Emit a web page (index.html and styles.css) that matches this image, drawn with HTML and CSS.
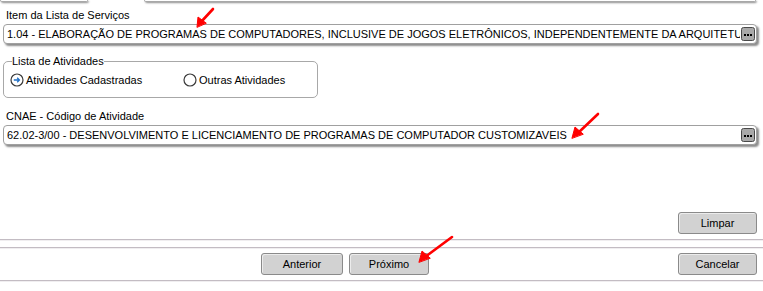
FILE: index.html
```html
<!DOCTYPE html>
<html lang="pt-BR">
<head>
  <meta charset="UTF-8">
  <title>Atividade</title>
<link rel="stylesheet" href="styles.css">
</head>
<body>

<div class="page">

  <!-- bottom of the fields above (cut off) -->
  <div class="stubs">
    <div class="stub stub-a"></div>
    <div class="stub stub-b"></div>
  </div>

  <div class="campo">
    <label class="rotulo">Item da Lista de Serviços</label>
    <div class="caixa">
      <span class="valor">1.04 - ELABORAÇÃO DE PROGRAMAS DE COMPUTADORES, INCLUSIVE DE JOGOS ELETRÔNICOS, INDEPENDENTEMENTE DA ARQUITETU</span>
      <span class="lupa">
        <svg width="14" height="14" viewBox="0 0 14 14">
          <rect x="0.5" y="0.5" width="13" height="13" rx="2" fill="#a9a9a9" stroke="#4a4a4a"/>
          <rect x="3" y="7" width="2" height="2" fill="#000"/>
          <rect x="6" y="7" width="2" height="2" fill="#000"/>
          <rect x="9" y="7" width="2" height="2" fill="#000"/>
        </svg>
      </span>
    </div>
  </div>

  <fieldset class="grupo">
    <legend>Lista de Atividades</legend>
    <div class="opcoes">
      <label class="opcao opcao-1">
        <svg width="14" height="14" viewBox="0 0 14 14">
          <circle cx="7" cy="7" r="6" fill="#fff" stroke="#3a3a3a" stroke-width="1.2"/>
          <path d="M3.8 7h5.6M7.2 4.8 9.4 7 7.2 9.2" fill="none" stroke="#1f6fc5" stroke-width="1.3"/>
        </svg>
        Atividades Cadastradas
      </label>
      <label class="opcao">
        <svg width="14" height="14" viewBox="0 0 14 14">
          <circle cx="7" cy="7" r="6" fill="#fff" stroke="#3a3a3a" stroke-width="1.2"/>
        </svg>
        Outras Atividades
      </label>
    </div>
  </fieldset>

  <div class="campo campo-cnae">
    <label class="rotulo">CNAE - Código de Atividade</label>
    <div class="caixa">
      <span class="valor">62.02-3/00 - DESENVOLVIMENTO E LICENCIAMENTO DE PROGRAMAS DE COMPUTADOR CUSTOMIZAVEIS</span>
      <span class="lupa">
        <svg width="14" height="14" viewBox="0 0 14 14">
          <rect x="0.5" y="0.5" width="13" height="13" rx="2" fill="#a9a9a9" stroke="#4a4a4a"/>
          <rect x="3" y="7" width="2" height="2" fill="#000"/>
          <rect x="6" y="7" width="2" height="2" fill="#000"/>
          <rect x="9" y="7" width="2" height="2" fill="#000"/>
        </svg>
      </span>
    </div>
  </div>

  <div class="linha-limpar">
    <button class="botao">Limpar</button>
  </div>
</div>

<hr class="traco traco-1">
<hr class="traco traco-2">

<div class="navegacao">
  <button class="botao botao-anterior">Anterior</button>
  <button class="botao botao-proximo">Próximo</button>
  <button class="botao botao-cancelar">Cancelar</button>
</div>

<hr class="traco traco-3">

<!-- red arrows drawn over the screenshot -->
<svg class="setas" width="763" height="291" viewBox="0 0 763 291">
  <g stroke="#f00" stroke-width="2.6" stroke-linecap="round" fill="#f00">
    <line x1="213" y1="9" x2="201" y2="22"/>
    <polygon points="197,27 198,17 206,23" stroke-width="1"/>
    <line x1="598" y1="114" x2="578" y2="133"/>
    <polygon points="572,138 575,127 583,134" stroke-width="1"/>
    <line x1="452" y1="237" x2="425" y2="257"/>
    <polygon points="419,262 422,251 430,258" stroke-width="1"/>
  </g>
</svg>

</body>
</html>
```

FILE: styles.css
```css
body {
    margin: 0;
    font-family: "Liberation Sans", Arial, sans-serif;
    font-size: 11px;
    color: #000;
    background: #fff;
    position: relative;
    width: 763px;
    height: 291px;
    overflow: hidden;
}

.page {
    padding: 0 6px 0 3px;
}

.stubs {
    display: flex;
    height: 3px;
}

.stub {
    height: 1px;
    border: 1px solid #a8a8a8;
    border-top: none;
    border-radius: 0 0 4px 4px;
    box-shadow: 1px 1px 2px #8a8a8a;
}

.stub-a {
    width: 86px;
    margin-left: -3px;
}

.stub-b {
    width: 610px;
    margin-left: 56px;
}

.campo {
    margin-top: 5px;
}

.rotulo {
    display: block;
    padding-left: 3px;
    line-height: 14px;
}

.caixa {
    margin-top: 2px;
    height: 18px;
    border: 1px solid #a0a0a0;
    border-radius: 4px;
    box-shadow: 2px 2px 2px #8c8c8c;
    display: flex;
    align-items: center;
    padding: 0 1px 0 3px;
    overflow: hidden;
    background: #fff;
}

.valor {
    flex: 1;
    white-space: nowrap;
    overflow: hidden;
    font-size: 11px;
    color: #000;
}

.lupa {
    flex: none;
    display: flex;
    margin-left: 1px;
}

.grupo {
    margin: 12px 0 0 0;
    width: 315px;
    padding: 0 0 0 6px;
    border: 1px solid #a8a8a8;
    border-radius: 5px;
    box-sizing: border-box;
    height: 42px;
}

.grupo legend {
    padding: 0;
    margin-left: 2px;
    line-height: 11px;
}

.opcoes {
    display: flex;
    margin-top: 6px;
}

.opcao {
    display: flex;
    align-items: center;
    gap: 2px;
}

.opcao-1 {
    width: 173px;
}

.campo-cnae {
    margin-top: 11px;
}

.linha-limpar {
    display: flex;
    justify-content: flex-end;
    margin-top: 67px;
}

.botao {
    height: 22px;
    width: 79px;
    border: 1px solid #8a8a8a;
    border-radius: 3px;
    background: #d2d2d2;
    box-shadow: inset 1px 1px 0 #ececec;
    font-family: "Liberation Sans", Arial, sans-serif;
    font-size: 11px;
    color: #000;
    padding: 0;
}

.traco {
    border: none;
    margin: 0;
    background: #c3bcc3;
    border-bottom: 1px solid #f0eef0;
    height: 1px;
}

.traco-1 {
    margin-top: 5px;
}

.traco-2 {
    margin-top: 6px;
}

.navegacao {
    display: flex;
    padding: 4px 6px 0 261px;
    gap: 6px;
    box-sizing: border-box;
    height: 31px;
}

.botao-anterior {
    width: 82px;
}

.botao-proximo {
    width: 80px;
}

.botao-cancelar {
    margin-left: auto;
    width: 79px;
}

.setas {
    position: absolute;
    left: 0;
    top: 0;
    pointer-events: none;
}
```
